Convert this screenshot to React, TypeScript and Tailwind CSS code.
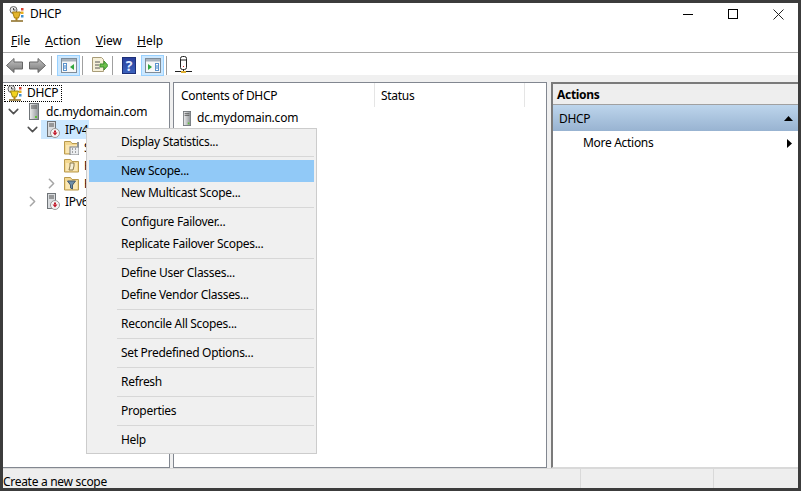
import { ChevronDown, ChevronRight } from "lucide-react"

const menuGroups = [
  ["Display Statistics..."],
  ["New Scope...", "New Multicast Scope..."],
  ["Configure Failover...", "Replicate Failover Scopes..."],
  ["Define User Classes...", "Define Vendor Classes..."],
  ["Reconcile All Scopes..."],
  ["Set Predefined Options..."],
  ["Refresh"],
  ["Properties"],
  ["Help"],
]

const DhcpIcon = ({ bright }: { bright?: boolean }) => (
  <svg width="16" height="17" viewBox="0 0 16 17" className="shrink-0">
    <circle cx="4.5" cy="4" r="3.5" fill="#e8e8e8" stroke="#666" />
    <path d="M4.5 2v2h2" fill="none" stroke="#444" />
    <path d="M3.500 6h8l-2 6h-4z" fill={bright ? "#f2d21e" : "#e3b52c"} stroke={bright ? "#9a8410" : "#a67c10"} />
    <rect x="12" y="2" width="2.500" height="2.500" fill="#d9412f" />
    <rect x="12" y="5.500" width="2.500" height="2.500" fill="#e8b020" />
    <rect x="12" y="9" width="2.500" height="2.500" fill="#3f8fd0" />
    <rect x="6.500" y="12" width="2" height="2.500" fill="#b8860b" />
    <path d="M2 15h12" stroke="#8a6a20" strokeWidth="1.500" />
  </svg>
)

const ServerIcon = ({ width = 10, height = 17 }: { width?: number; height?: number }) => (
  <svg width={width} height={height} viewBox="0 0 10 17" preserveAspectRatio="none" className="shrink-0">
    <defs>
      <linearGradient id="srv" x1="0" x2="1" y1="0" y2="0">
        <stop offset="0" stopColor="#f0f0f0" />
        <stop offset="1" stopColor="#8d9296" />
      </linearGradient>
    </defs>
    <rect x="0.500" y="0.500" width="9" height="16" fill="url(#srv)" stroke="#6f7478" />
    <path d="M2 3h6M2 5h6" stroke="#555" />
    <rect x="6" y="13" width="2" height="2" fill="#5fbf3a" />
  </svg>
)

const ProtocolIcon = () => (
  <svg width="14" height="17" viewBox="0 0 14 17" className="shrink-0">
    <rect x="1.500" y="0.500" width="8" height="15" fill="#d9dcdf" stroke="#6f7478" />
    <path d="M3 3h5M3 5h5" stroke="#555" />
    <circle cx="9" cy="12" r="4.500" fill="#f4f4f4" stroke="#9a9a9a" />
    <path d="M6.500 11.500h5L9 14.500z" fill="#c0182a" />
    <rect x="8" y="9.500" width="2" height="2" fill="#c0182a" />
  </svg>
)

const FolderIcon = ({ kind }: { kind: "scope" | "policy" | "filter" }) => (
  <svg width="15" height="15" viewBox="0 0 15 15" className="shrink-0">
    <path d="M0.500 14V1.500h6l1.500 2h6.500V14z" fill="#f3d891" stroke="#b99a4e" />
    <rect x="2" y="5" width="11" height="8" fill="#fae7b4" />
    {kind === "scope" && (
      <>
        <rect x="6" y="7" width="9" height="8" fill="#eceef0" stroke="#7a7f84" />
        <path d="M8 9h1M11 9h1M8 12h1M11 12h1" stroke="#555" />
        <rect x="13" y="2" width="2" height="5" fill="#8d9296" />
      </>
    )}
    {kind === "policy" && <path d="M6 5h4v3l-1 4H5l1-4z" fill="#f7efd6" stroke="#8b7a4c" />}
    {kind === "filter" && <path d="M3.500 5h8L8.500 9v4l-2-1V9z" fill="#6f8ea8" stroke="#44596c" />}
  </svg>
)

const ArrowIcon = ({ right }: { right?: boolean }) => (
  <svg width="17" height="15" viewBox="0 0 17 15" className="shrink-0">
    <defs>
      <linearGradient id="arrowFill" x1="0" x2="0" y1="0" y2="1">
        <stop offset="0" stopColor="#c4c4c4" />
        <stop offset="1" stopColor="#767676" />
      </linearGradient>
    </defs>
    <path
      d={right ? "M9 0.500L16.500 7.500 9 14.500V11H0.500V4H9z" : "M8 0.500L0.500 7.500 8 14.500V11h8.500V4H8z"}
      fill="url(#arrowFill)"
      stroke="#666"
    />
  </svg>
)

const PanelIcon = ({ flip }: { flip?: boolean }) => (
  <svg width="16" height="15" viewBox="0 0 16 15">
    <rect x="0.500" y="0.500" width="15" height="14" fill="#f7f7f7" stroke="#7f8c98" />
    <rect x="1" y="1" width="14" height="2.500" fill="#a8b2bc" />
    {flip ? (
      <>
        <path d="M3 6v6l4-3z" fill="#31a83f" />
        <rect x="10.500" y="5.500" width="3" height="7" fill="#fff" stroke="#5b93cc" />
        <path d="M11 8h2M11 10h2" stroke="#3f7fc4" />
      </>
    ) : (
      <>
        <rect x="2.500" y="5.500" width="3" height="7" fill="#fff" stroke="#5b93cc" />
        <path d="M3 8h2M3 10h2" stroke="#3f7fc4" />
        <path d="M13 6v6l-4-3z" fill="#31a83f" />
      </>
    )}
  </svg>
)

const ToolSep = () => <div className="w-px h-[19px] bg-[#a0a0a0]" />

const TreeRow = ({
  indent,
  arrow,
  icon,
  label,
  selected,
}: {
  indent: string
  arrow?: "open" | "closed"
  icon: React.ReactNode
  label: string
  selected?: boolean
}) => (
  <div className={`flex items-center h-[18px] ${indent}`}>
    <div className="w-[18px] flex justify-center shrink-0">
      {arrow === "open" && <ChevronDown size={17} strokeWidth={2.2} className="text-[#505050]" />}
      {arrow === "closed" && <ChevronRight size={17} strokeWidth={2.2} className="text-[#a6a6a6]" />}
    </div>
    <div className={`flex items-center h-[19px] ${selected ? "bg-[#cce8ff]" : ""}`}>
      <div className="w-[24px] flex justify-center pr-px">{icon}</div>
      <span className="whitespace-nowrap pt-px tracking-[-0.2px]">{label}</span>
    </div>
  </div>
)

const App = () => {
  return (
    <div className="relative w-[801px] h-[491px] overflow-hidden bg-[#f0f0f0] border-x-[3px] border-t-[3px] border-b-[3px] border-[#3c3c3c] text-[12px] tracking-[-0.3px] text-black flex flex-col font-['Noto_Sans',sans-serif]">
      {/* title bar */}
      <div className="h-[27px] shrink-0 bg-white flex items-center pl-[6px] pb-[5px]">
        <DhcpIcon />
        <span className="ml-[5px]">DHCP</span>
        <div className="ml-auto flex items-center">
          <div className="w-[10px] h-px bg-black mr-[35px]" />
          <div className="w-[10px] h-[10px] border border-black mr-[35px]" />
          <svg width="11" height="11" viewBox="0 0 11 11" className="mr-[14px]">
            <path d="M0.500 0.500l10 10M10.500 0.500l-10 10" stroke="#222" />
          </svg>
        </div>
      </div>
      {/* menu */}
      <div className="h-[22px] shrink-0 bg-white flex items-center gap-[15px] pl-[8px] border-b border-[#a9a9a9] box-content tracking-normal">
        <span><u>F</u>ile</span>
        <span><u>A</u>ction</span>
        <span><u>V</u>iew</span>
        <span><u>H</u>elp</span>
      </div>
      {/* toolbar */}
      <div className="h-[22px] shrink-0 bg-white flex items-center pl-[3px] pt-[2px]">
        <ArrowIcon />
        <div className="w-[6px]" />
        <ArrowIcon right />
        <div className="w-[5px]" />
        <ToolSep />
        <div className="w-[5px]" />
        <div className="w-[23px] h-[21px] bg-[#cce8ff] border border-[#99d1ff] flex items-center justify-center">
          <PanelIcon />
        </div>
        <div className="w-[2px]" />
        <ToolSep />
        <div className="ml-[8px] w-[17px] h-[17px] flex items-center">
          <svg width="17" height="16" viewBox="0 0 17 16">
            <path d="M1.500 0.500h9l2 2v12h-11z" fill="#f6f0d8" stroke="#a89c78" />
            <path d="M4 5h5M4 8h4M4 11h5" stroke="#555" />
            <path d="M9 7h4V4l4 4.500-4 4.500v-3H9z" fill="#6cc04a" stroke="#3e9030" />
          </svg>
        </div>
        <div className="w-[4px]" />
        <ToolSep />
        <div className="ml-[9px] w-[14px] h-[17px] bg-gradient-to-b from-[#2a3f9c] to-[#3b62bc] border border-[#1c2f78] flex items-center justify-center text-[#dfe8ff] font-bold text-[14px]">
          ?
        </div>
        <div className="w-[5px]" />
        <div className="w-[23px] h-[21px] bg-[#cce8ff] border border-[#99d1ff] flex items-center justify-center">
          <PanelIcon flip />
        </div>
        <div className="w-[2px]" />
        <ToolSep />
        <div className="ml-[8px]">
          <svg width="17" height="18" viewBox="0 0 17 18">
            <rect x="5.500" y="0.500" width="6" height="13" rx="2" fill="#fff" stroke="#222" />
            <path d="M6 4h5" stroke="#222" />
            <rect x="8" y="10" width="1" height="1" fill="#d02020" />
            <path d="M8.500 14v1M0 15.500h17" stroke="#222" />
            <rect x="6" y="15" width="5" height="2" fill="#e0b030" />
          </svg>
        </div>
      </div>
      {/* panels */}
      <div className="flex-1 min-h-0 flex pt-[7px] gap-[3px]">
        <div className="w-[167px] shrink-0 bg-white border-t border-r border-b border-[#828790] pt-px">
          <div className="flex items-center h-[18px] pl-[1px]">
            <div className="flex items-center gap-[3px] w-[58px] h-[17px] pl-[2px] border border-dotted border-black">
              <DhcpIcon bright />
              <span className="ml-[1px]">DHCP</span>
            </div>
          </div>
          <TreeRow indent="pl-[1px]" arrow="open" icon={<ServerIcon />} label="dc.mydomain.com" />
          <TreeRow indent="pl-[20px]" arrow="open" icon={<ProtocolIcon />} label="IPv4" selected />
          <TreeRow indent="pl-[39px]" icon={<FolderIcon kind="scope" />} label="Server Options" />
          <TreeRow indent="pl-[39px]" icon={<FolderIcon kind="policy" />} label="Policies" />
          <TreeRow indent="pl-[39px]" arrow="closed" icon={<FolderIcon kind="filter" />} label="Filters" />
          <TreeRow indent="pl-[20px]" arrow="closed" icon={<ProtocolIcon />} label="IPv6" />
        </div>
        <div className="w-[374px] shrink-0 bg-white border border-[#828790]">
          <div className="flex h-[24px] items-center">
            <div className="w-[201px] h-full flex items-center pl-[7px] pt-[2px] border-r border-[#e5e5e5]">Contents of DHCP</div>
            <div className="w-[150px] h-full flex items-center pl-[6px] pt-[2px] border-r border-[#e5e5e5]">Status</div>
          </div>
          <div className="flex items-center h-[20px] pl-[9px] gap-[6px] mt-[1px]">
            <ServerIcon width={8} height={15} />
            <span className="tracking-[-0.2px]">dc.mydomain.com</span>
          </div>
        </div>
        <div className="flex-1 min-w-0 bg-white border-l-2 border-t-2 border-[#7a7a7a] border-b border-b-[#d9d9d9] ml-[1px]">
          <div className="h-[21px] bg-[#eeeeee] border-b border-[#a0a0a0] flex items-center pl-[4px] pt-[2px] font-bold">
            Actions
          </div>
          <div className="h-[26px] bg-gradient-to-b from-[#bdd5ec] to-[#98b3d1] flex items-center pl-[6px] pr-[5px] justify-between">
            <span className="pt-[2px]">DHCP</span>
            <svg width="9" height="5" viewBox="0 0 9 5"><path d="M0 5l4.500-5 4.500 5z" fill="#000" /></svg>
          </div>
          <div className="h-[24px] flex items-center pl-[30px] pr-[6px] justify-between">
            <span>More Actions</span>
            <svg width="5" height="9" viewBox="0 0 5 9"><path d="M0 0l5 4.500-5 4.500z" fill="#000" /></svg>
          </div>
        </div>
      </div>
      {/* status bar */}
      <div className="h-[20px] shrink-0 flex border-t border-[#d9d9d9] bg-[#eeeeee]">
        <div className="w-[578px] border-r border-[#d9d9d9] leading-[20px] pt-[3px] whitespace-nowrap">Create a new scope</div>
        <div className="w-[133px] border-r border-[#d9d9d9]" />
      </div>
      {/* context menu */}
      <div className="absolute left-[83px] top-[125px] w-[231px] bg-[#f0f0f0] border border-[#cccccc] py-[2px] px-[2px]">
        {menuGroups.map((group, i) => (
          <div key={i}>
            {i > 0 && (
              <div className="h-[7px] flex items-center pl-[28px]">
                <div className="h-px w-full bg-[#d7d7d7]" />
              </div>
            )}
            {group.map((item) => (
              <div
                key={item}
                className={`h-[22px] flex items-center pl-[32px] ${item === "New Scope..." ? "bg-[#91c9f7]" : ""}`}
              >
                {item}
              </div>
            ))}
          </div>
        ))}
      </div>
    </div>
  )
}

export default App
